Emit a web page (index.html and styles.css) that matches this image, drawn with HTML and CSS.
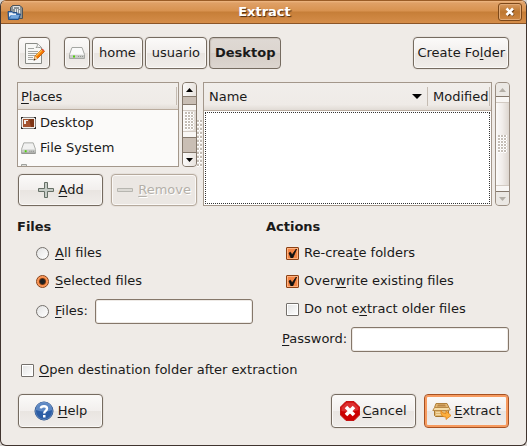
FILE: index.html
```html
<!DOCTYPE html>
<html lang="en">
<head>
<meta charset="utf-8">
<title>Extract</title>
<link rel="stylesheet" href="styles.css">
</head>
<body>
<main class="window">
  <header class="titlebar">
    <svg class="app-icon" width="17" height="17" viewBox="0 0 17 17" aria-hidden="true">
      <path d="M3.500 8V3.500L5.500 1.500H13L15.500 4V14.500H10" fill="#8b9295" stroke="#4d5357"/>
      <path d="M6.500 5V2.500H12.500V5" fill="none" stroke="#dfe2e2"/>
      <path d="M8.500 5v3M10.500 5v5l2 1.500V6" fill="none" stroke="#e5e7e7"/>
      <path d="M1 7.500H5L6 8.500H10V10H13.500L11.500 15.500H1.500z" fill="#3f78b8" stroke="#244f86"/>
      <path d="M2 8.500H5L6 9.500H9V11H4L2 13z" fill="#e8eef5"/>
      <path d="M4.500 11h8l-1.500 3.500H3z" fill="#75a7dc"/>
    </svg>
    <h1 class="title">Extract</h1>
    <button class="close" type="button" aria-label="Close">
      <svg width="10" height="10" viewBox="0 0 10 10"><path d="M2.500 2.500l6 6m0-6l-6 6" stroke="#6b3c15" stroke-width="3"/><path d="M1.500 1.500l6.500 6.500m0-6.500l-6.500 6.500" stroke="#fff" stroke-width="2.600"/></svg>
    </button>
  </header>

  <form class="content">
    <div class="toolbar">
      <button class="btn icon-btn" type="button" aria-label="Type a file name">
        <svg width="22" height="24" viewBox="0 0 22 24">
          <path d="M2.500 2.500H14l4.500 4V22.500h-16z" fill="#f8f8f6" stroke="#888a85"/>
          <path d="M14 2.500c1 2 0 3-1 4 2-.5 4 0 5.500.5" fill="#fff" stroke="#999b96"/>
          <path d="M5 7.500h6M5 10.500h10M5 12.500h9M5 14.500h8M5 16.500h5M5 18.500h5" stroke="#a4a6a2"/>
          <path d="M11 19l1-4 7-7 2.500 2.500-7 7z" fill="#f57900" stroke="#b95708" stroke-width=".8"/>
          <path d="M13 15l6-6" stroke="#fcc04c" stroke-width="1.200"/>
          <path d="M11 19l1-4 2.500 2.500z" fill="#f1d6a2"/><path d="M10.500 19.500l.6-2 1.400 1.400z" fill="#222"/>
          <path d="M18.500 8.500l1-1 2 2-1 1z" fill="#d94b3b"/>
        </svg>
      </button>
      <nav class="path">
        <button class="btn path-btn drive" type="button" aria-label="File System">
          <svg width="16" height="14" viewBox="0 0 16 14"><path d="M3 1.500h10l2.500 7v4H.5v-4z" fill="#fafafa" stroke="#a5a7a3"/><path d="M1 8.500h14v3.500H1z" fill="#c8cac7"/><path d="M1 8.500h14" stroke="#eee"/><path d="M4 10.500h2" stroke="#4dce08" stroke-width="2"/><path d="M9 10.500h5" stroke="#92958f" stroke-dasharray="1 1"/></svg>
        </button>
        <button class="btn path-btn" type="button">home</button>
        <button class="btn path-btn" type="button">usuario</button>
        <button class="btn path-btn current" type="button">Desktop</button>
      </nav>
      <button class="btn create" type="button"><span>Create Fo<u>l</u>der</span></button>
    </div>

    <div class="panes">
      <section class="side">
        <div class="scroller">
          <div class="places">
            <h2 class="places-head"><span><u>P</u>laces</span></h2>
            <ul class="places-list">
              <li>
                <svg width="15" height="14" viewBox="0 0 15 14" aria-hidden="true"><path d="M.5 1.500h14v11H.5z" fill="#f3f0ec" stroke="#8a8683"/><path d="M2 3h11v8H2z" fill="#7d3414"/><path d="M2 3h6l2 8H2z" fill="#a4532f"/><path d="M3 4h4v1H5v3H3z" fill="#f4eee9"/><path d="M0 1h2v1H1v1H0zM13 1h2v2h-1V2h-1zM0 11h1v1h1v1H0zM14 11h1v2h-2v-1h1z" fill="#2b2826"/></svg>
                Desktop
              </li>
              <li>
                <svg width="15" height="14" viewBox="0 0 16 14" aria-hidden="true"><path d="M3 1.500h10l2.500 7v4H.5v-4z" fill="#f1f1f0" stroke="#a5a7a3"/><path d="M1 8.500h14v3.500H1z" fill="#c8cac7"/><path d="M.5 12.500h15" stroke="#777975"/><path d="M4 10.500h2" stroke="#4dce08" stroke-width="2"/><path d="M9 10.500h5" stroke="#777" stroke-dasharray="1 1"/></svg>
                File System
              </li>
              <li>
                <svg width="15" height="14" viewBox="0 0 15 14" aria-hidden="true"><path d="M.5 .5h5v2h9v11H.5z" fill="#dddeda" stroke="#a0a29e"/><path d="M2 2.500h3" stroke="#888"/></svg>
              </li>
            </ul>
          </div>
          <div class="scrollbar">
            <button class="step" type="button" aria-label="Scroll up"><svg width="7" height="4" viewBox="0 0 7 4"><path d="M0 4L3.500 0L7 4z" fill="currentColor"/></svg></button>
            <div class="trough before"></div>
            <div class="thumb"><span class="grip"></span></div>
            <div class="trough after"></div>
            <button class="step" type="button" aria-label="Scroll down"><svg width="7" height="4" viewBox="0 0 7 4"><path d="M0 0L3.500 4L7 0z" fill="currentColor"/></svg></button>
          </div>
        </div>
        <div class="side-actions">
          <button class="btn" type="button">
            <svg width="16" height="16" viewBox="0 0 16 16"><path d="M6.500 .5h3v6h6v3h-6v6h-3v-6h-6v-3h6z" fill="#c5cbc5" stroke="#667066"/></svg>
            <span><u>A</u>dd</span>
          </button>
          <button class="btn" type="button" disabled>
            <svg width="16" height="16" viewBox="0 0 16 16"><path d="M.5 6.500h15v3H.5z" fill="#dcdad5" stroke="#b7b6b0"/></svg>
            <span><u>R</u>emove</span>
          </button>
        </div>
      </section>
      <div class="handle"></div>
      <section class="scroller">
        <div class="files">
          <table class="files-table">
            <thead>
              <tr>
                <th class="name"><div class="cell">Name <svg width="10" height="5" viewBox="0 0 10 5" aria-hidden="true"><path d="M0 0h10L5 5z" fill="#000"/></svg></div></th>
                <th class="modified"><div class="cell">Modified</div></th>
              </tr>
            </thead>
          </table>
          <div class="files-body"></div>
        </div>
        <div class="scrollbar idle">
          <button class="step" type="button" aria-label="Scroll up" disabled><svg width="7" height="4" viewBox="0 0 7 4"><path d="M0 4L3.500 0L7 4z" fill="currentColor"/></svg></button>
          <div class="thumb"><span class="grip"></span></div>
          <button class="step" type="button" aria-label="Scroll down" disabled><svg width="7" height="4" viewBox="0 0 7 4"><path d="M0 0L3.500 4L7 0z" fill="currentColor"/></svg></button>
        </div>
      </section>
    </div>

    <div class="options">
      <section>
        <h2 class="heading">Files</h2>
        <div class="option"><input class="radio" type="radio" name="files" id="all"><label for="all"><u>A</u>ll files</label></div>
        <div class="option"><input class="radio" type="radio" name="files" id="selected" checked><label for="selected"><u>S</u>elected files</label></div>
        <div class="option entry"><input class="radio" type="radio" name="files" id="pattern"><label for="pattern"><u>F</u>iles:</label><input class="text" type="text" aria-label="File pattern"></div>
      </section>
      <section>
        <h2 class="heading">Actions</h2>
        <div class="option"><input class="check" type="checkbox" id="recreate" checked><label for="recreate">Re-crea<u>t</u>e folders</label></div>
        <div class="option"><input class="check" type="checkbox" id="overwrite" checked><label for="overwrite">Over<u>w</u>rite existing files</label></div>
        <div class="option"><input class="check" type="checkbox" id="older"><label for="older">Do not e<u>x</u>tract older files</label></div>
        <div class="option entry password"><label for="password"><u>P</u>assword:</label><input class="text" type="password" id="password"></div>
      </section>
    </div>

    <div class="open-after"><input class="check" type="checkbox" id="open"><label for="open"><u>O</u>pen destination folder after extraction</label></div>

    <footer class="footer">
      <button class="btn" type="button">
        <svg width="20" height="20" viewBox="0 0 20 20"><circle cx="10" cy="10" r="9" fill="#2c5da5" stroke="#204a87"/><path d="M2 9a8 8 0 0 1 16 0q-7 3-16 0z" fill="#5c87c3"/><circle cx="10" cy="10" r="8.500" fill="none" stroke="#7d9fce" stroke-width=".6"/><path d="M6.800 7.400C7.200 4.500 13 4.400 13 7.600C13 10 10.200 9.800 10.200 12.500" fill="none" stroke="#fff" stroke-width="2.400"/><path d="M9 14h2.500v2.500H9z" fill="#fff"/></svg>
        <span><u>H</u>elp</span>
      </button>
      <button class="btn cancel" type="button">
        <svg width="20" height="20" viewBox="0 0 20 20"><path d="M6 .5h8L19.500 6v8L14 19.500H6L.5 14V6z" fill="#cc0000" stroke="#c41414"/><path d="M6.500 1.500h7L18.500 6.500V9Q10 12 1.500 10V6.500z" fill="#dc3030"/><path d="M6 6l8 8M14 6L6 14" stroke="#fff" stroke-width="3.600"/></svg>
        <span><u>C</u>ancel</span>
      </button>
      <button class="btn default" type="submit">
        <svg width="20" height="18" viewBox="0 0 20 18"><path d="M2.500 6.500h14v7l-1 1h-12l-1-1z" fill="#e0b873" stroke="#a8762f"/><path d="M4 1.500h11l2 4H2.500z" fill="#e2b671" stroke="#b0803c"/><path d="M6 2.500h7l1 2H5z" fill="#b98748"/><path d="M2.500 5.500L.8 8.500h14l3.500-.5-1.300-2.500z" fill="#f6dda8" stroke="#b98a48"/><path d="M4 10.500h5M4 12.500h5" stroke="#f2d8a6"/><path d="M9 8.500c1 2.500 2.500 3 5 3V9l5 4.500-5 4V15c-4 0-5.500-2.500-5-6.500z" fill="#fcaf3e" stroke="#e08218" stroke-width=".8"/></svg>
        <span><u>E</u>xtract</span>
      </button>
    </footer>
  </form>
</main>
</body>
</html>
```

FILE: styles.css
```css
* { box-sizing: border-box; }

body {
  margin: 0;
  background: #d8d4d0;
  color: #1a1a1a;
  font: 13px/16px "DejaVu Sans", sans-serif;
}

button, input { font: inherit; color: inherit; margin: 0; }
h1, h2, ul { margin: 0; padding: 0; font-size: inherit; }
svg { display: block; flex: none; }
u { text-decoration-thickness: 1px; text-underline-offset: 2px; }

.window {
  min-height: 100vh;
  background: #efebe7;
  border: 1px solid #40342f;
  border-top-color: #9a5c26;
  border-radius: 6px;
  overflow: hidden;
}

.titlebar {
  display: grid;
  grid-template-columns: 24px 1fr 24px;
  align-items: center;
  height: 23px;
  padding: 0 4px 0 6px;
  border-bottom: 1px solid #8b5527;
  background: linear-gradient(#efb883 0, #dfa066 2px, #d8924f 10px, #c67e38 11px, #d58d49 100%);
}
.title {
  color: #fff;
  text-align: center;
  text-shadow: 1px 1px 1px #4a2a10;
}
.close {
  display: grid;
  place-items: center;
  width: 24px;
  height: 18px;
  padding: 0;
  border: 1px solid #7d4819;
  border-radius: 3px;
  background: linear-gradient(#d99a5f, #bd7730 50%, #cf8743);
  box-shadow: inset 0 0 0 1px #e0a976;
}

.content { padding: 13px 16px 16px; }

.btn {
  display: flex;
  align-items: center;
  justify-content: center;
  gap: 5px;
  height: 32px;
  padding: 0 5px;
  border: 1px solid #756b60;
  border-radius: 4px;
  background: linear-gradient(#fbfaf9, #f2efed 50%, #e9e5e1 51%, #f0edea);
  box-shadow: inset 0 0 0 1px #faf8f6, 0 0 0 1px #e6e1dc;
  white-space: nowrap;
}
.btn:disabled {
  border-color: #b5a99c;
  background: #ebe7e3;
  color: #b4b0a9;
  text-shadow: 1px 1px 0 #fff;
}

.toolbar { display: flex; padding: 0 1px; }
.icon-btn { width: 32px; padding: 0; margin-right: 14px; }
.path { display: flex; gap: 2px; }
.path-btn { padding: 0 6px; }
.drive { width: 26px; padding: 0; }
.path-btn.current {
  padding: 0 5px;
  background: linear-gradient(#dfd9d4, #dcd5cf 50%, #d4ccc5 51%, #ddd6d0);
  box-shadow: inset 1px 1px 1px #c8bfb7;
  font-weight: bold;
}
.create { margin-left: auto; padding: 0 3px; }

.panes {
  display: grid;
  grid-template-columns: 180px 6px 1fr;
  margin-top: 13px;
}
.scroller { display: flex; gap: 3px; }
.side .scroller { height: 85px; }

.places {
  flex: 1;
  overflow: hidden;
  border: 1px solid #a3978b;
  background: #fbfaf9;
}
.places-head, .files-table th {
  height: 27px;
  padding: 4px 0;
  border-bottom: 1px solid #b9ab9d;
  background: linear-gradient(#f1eeeb, #efebe7 80%, #e1dbd5);
  font-weight: normal;
  text-align: left;
}
.places-head { padding-right: 1px; }
.places-head span { display: block; padding: 2px 3px 0; border-right: 1px solid #c5bcb2; line-height: 16px; }
.places-list { list-style: none; }
.places-list li {
  display: flex;
  align-items: center;
  gap: 4px;
  height: 25px;
  padding: 0 3px;
}
.places-list li:last-child { align-items: flex-start; padding-top: 4px; }

.side-actions {
  display: grid;
  grid-template-columns: 1fr 1fr;
  gap: 8px;
  padding: 7px 0 0 1px;
}

.handle {
  align-self: center;
  width: 5px;
  height: 48px;
  background: radial-gradient(circle at 1px 1px, #c5beb6 0 1px, #fff 1px 2px, transparent 2px) 0 0 / 3px 4px;
}

.scrollbar {
  display: flex;
  flex-direction: column;
  width: 15px;
  border: 1px solid #84786c;
  border-radius: 4px;
  overflow: hidden;
  background: #c9beb4;
}
.step {
  display: grid;
  place-items: center;
  height: 13px;
  padding: 0;
  border: 0;
  background: linear-gradient(90deg, #faf9f8, #e8e3de);
  color: #000;
}
.before { flex: 7; border-top: 1px solid #84786c; }
.after { flex: 15; border-bottom: 1px solid #84786c; }
.thumb {
  display: grid;
  place-items: center;
  flex: 35;
  border: 1px solid #84786c;
  border-width: 1px 0;
  background: linear-gradient(90deg, #fbfaf9, #f0ece9 50%, #ddd6cf);
  box-shadow: inset 0 5px #f8f6f4, inset 0 6px #d2cac2, inset 0 -5px #f8f6f4, inset 0 -6px #d2cac2;
}
.grip {
  width: 9px;
  height: 18px;
  background: radial-gradient(circle at 1px 1px, #c5beb6 0 1px, #fff 1px 2px, transparent 2px) 0 0 / 3px 3px;
}
.idle { border-color: #9b8f83; }
.idle .step { background: #ebe8e4; color: #b3aea6; }

.files {
  display: flex;
  flex-direction: column;
  flex: 1;
  border: 1px solid #a3978b;
  background: #fff;
}
.files-table { width: 100%; border-collapse: collapse; }
.files-table th { padding: 3px 0; }
.files-table .cell {
  display: flex;
  align-items: center;
  justify-content: space-between;
  height: 19px;
  padding: 1px 5px 0;
  border-right: 1px solid #c5bcb2;
}
.files-table .modified { width: 63px; padding-right: 1px; }
.modified .cell { padding-right: 0; }
.files-body { flex: 1; margin: 1px; border: 1px dotted #333; }

.options {
  display: grid;
  grid-template-columns: 249fr 244fr;
  margin-top: 13px;
}
.heading { margin-bottom: 4px; font-weight: bold; }
.option { display: flex; align-items: center; height: 28px; padding-left: 19px; }
.option label { padding-bottom: 1px; }
.entry { height: 25px; margin-top: 4px; }
.entry .text { width: 158px; margin-left: auto; }
.entry:not(.password) { padding-right: 13px; }
.entry.password { padding: 0 1px 0 16px; }

.text {
  height: 25px;
  padding: 2px 5px;
  border: 1px solid #85776a;
  border-radius: 3px;
  background: #fff;
  box-shadow: inset 0 0 0 1px #eeeae6;
}

.radio, .check {
  appearance: none;
  flex: none;
  width: 13px;
  height: 13px;
  border: 1px solid #74706c;
  background: linear-gradient(135deg, #e3e3e3, #fff);
}
.radio { margin-right: 6px; border-radius: 50%; }
.check { margin: 1px 5px 0 1px; border-radius: 1px; box-shadow: inset 0 0 0 1px #fff; }
.radio:checked {
  border-color: #884015;
  background: radial-gradient(circle, #1c2022 0 2px, #6b3717 3px, #fb8b46 4px, #ffad78 6px);
}
.check:checked {
  border-color: #8c4115;
  background: #f58545 url("data:image/svg+xml,%3Csvg xmlns='http://www.w3.org/2000/svg' viewBox='0 0 11 11'%3E%3Cpath d='M2 5l1.500-.8L5 7l5-7-4.300 10H4z' fill='%23111' stroke='%23111' stroke-width='.8'/%3E%3C/svg%3E") center / 11px 11px no-repeat;
  box-shadow: inset 0 0 0 1px #ffb27f;
}

.open-after { display: flex; align-items: center; margin-top: 10px; padding-left: 3px; }

.footer { display: flex; gap: 8px; margin-top: 16px; padding: 0 1px; }
.footer .btn { width: 85px; height: 34px; gap: 4px; padding: 0; }
.footer .cancel { margin-left: auto; gap: 2px; }
.footer .default {
  gap: 2px;
  border-color: #a65122;
  box-shadow: inset 0 0 0 2px #f79b60;
}
```
